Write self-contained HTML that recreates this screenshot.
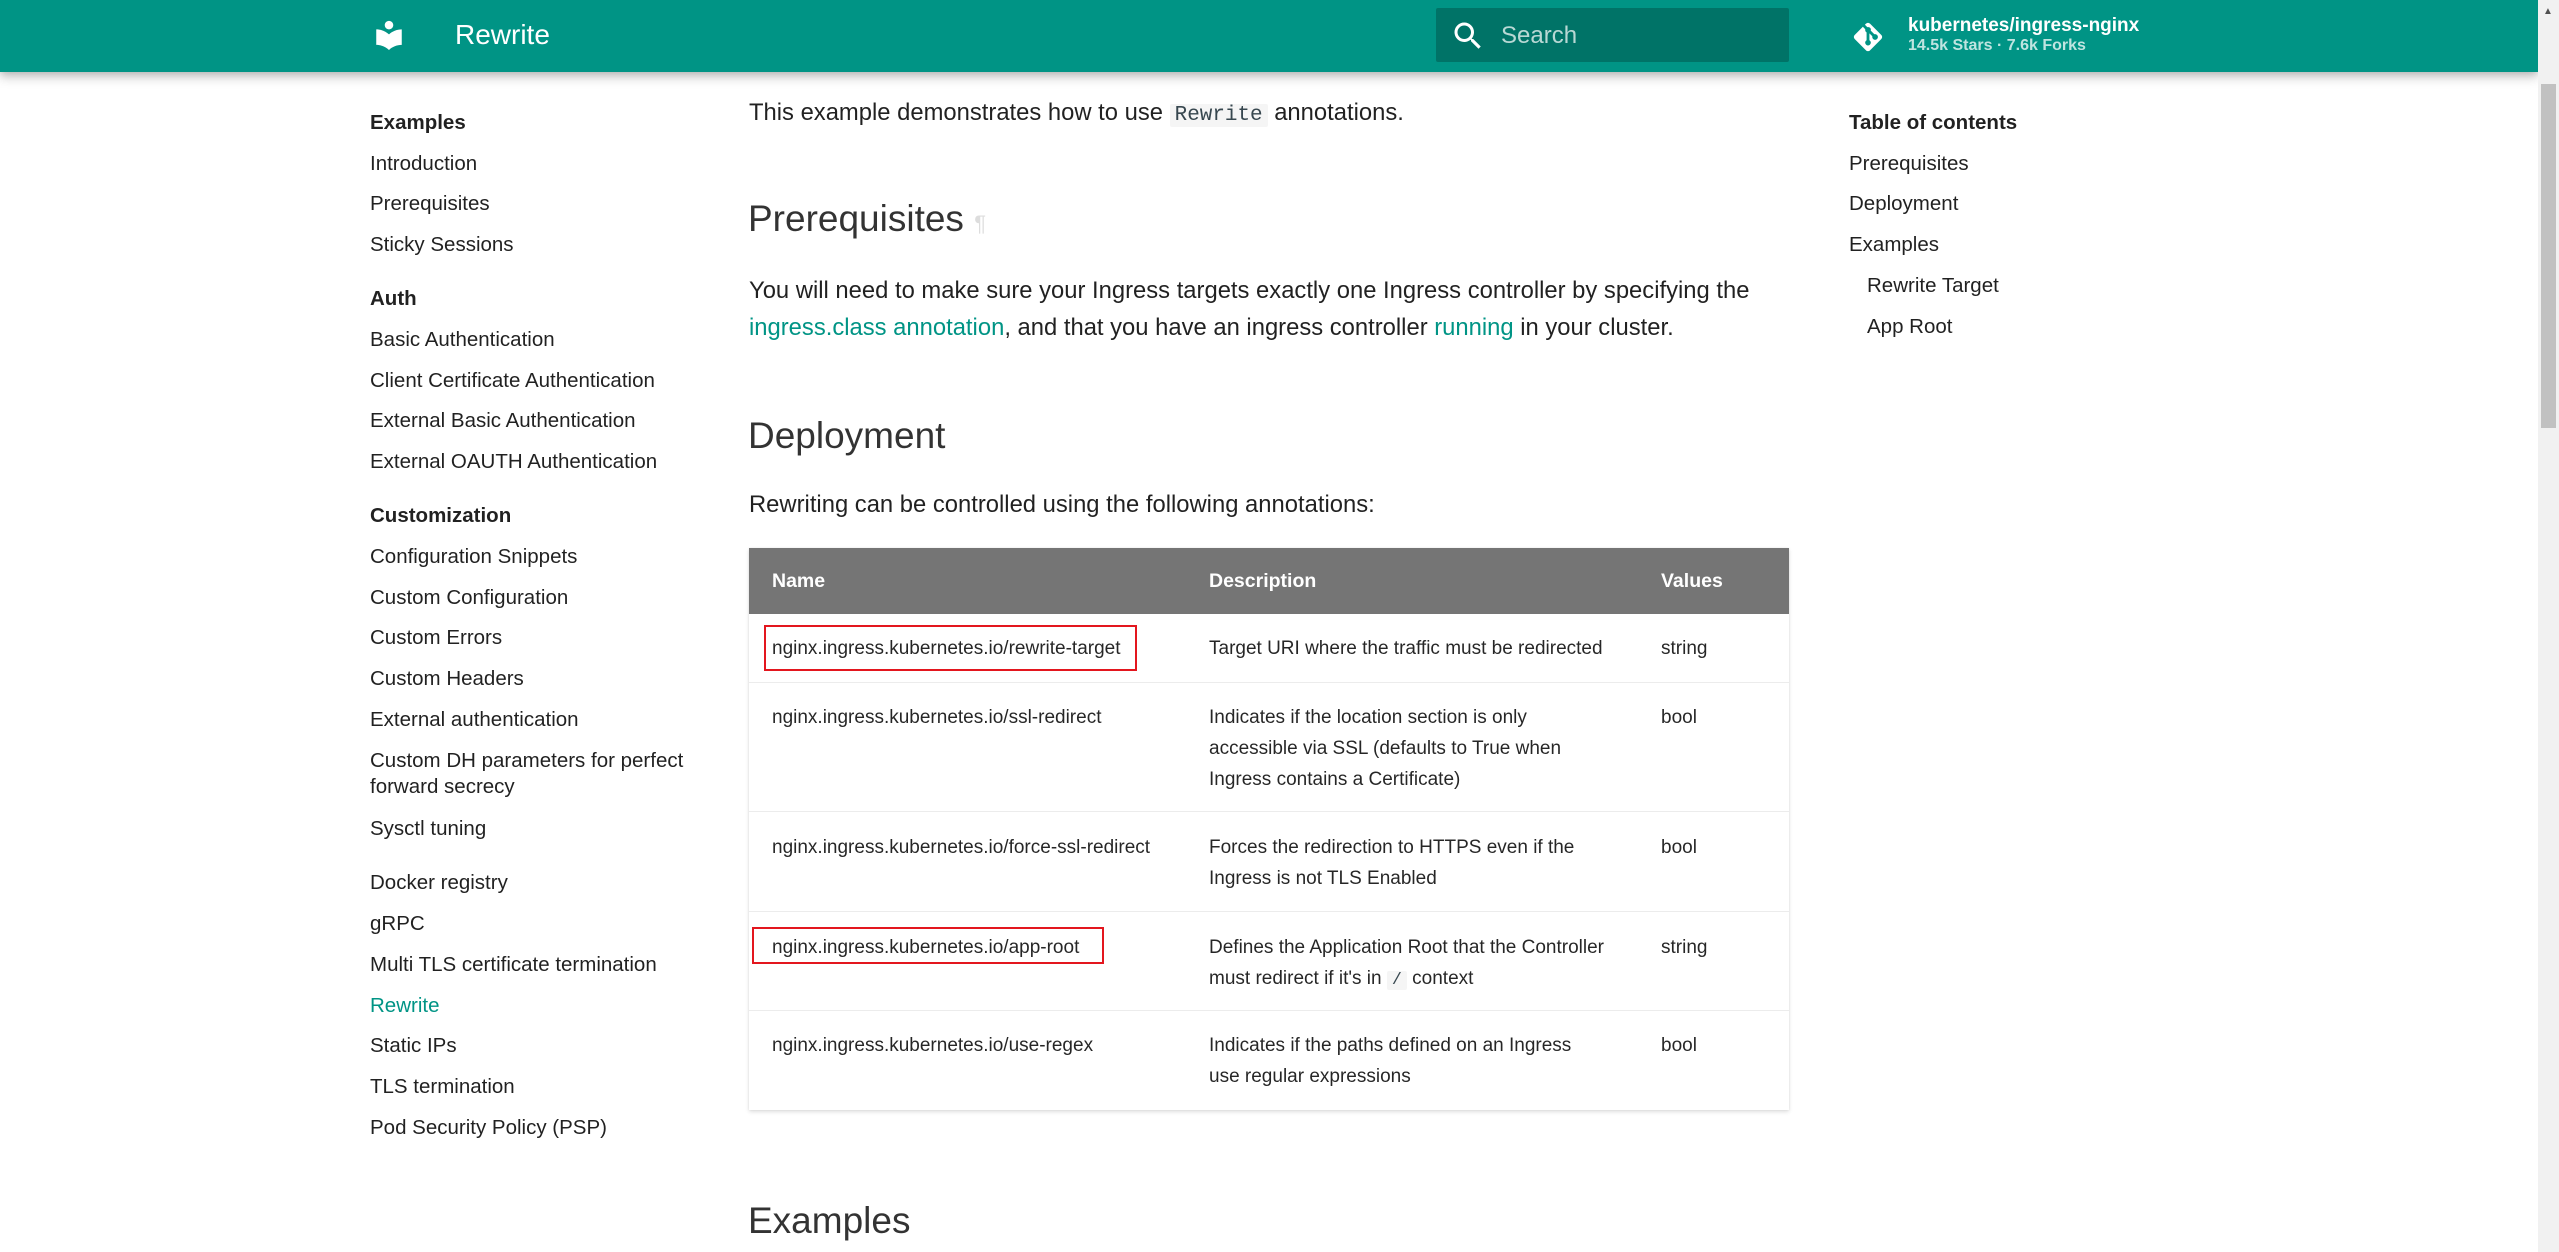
<!DOCTYPE html>
<html><head><meta charset="utf-8"><style>
*{margin:0;padding:0;box-sizing:border-box}
html,body{width:2559px;height:1252px;overflow:hidden;background:#fff;font-family:"Liberation Sans",Arial,sans-serif;color:rgba(0,0,0,.87)}
.t{position:absolute;white-space:nowrap}
.hd{position:absolute;left:0;top:0;width:2538px;height:72px;background:#009485;box-shadow:0 0 8px rgba(0,0,0,.2),0 6px 10px rgba(0,0,0,.18)}
.nav{font-size:20.5px;line-height:28px;left:370px;color:rgba(0,0,0,.87);margin-top:2px}
.nav.b{font-weight:bold}
.toc{font-size:20.5px;line-height:28px;color:rgba(0,0,0,.87);margin-top:2px}
.p{font-size:23.8px;line-height:30px;left:749px;color:rgba(0,0,0,.87);margin-top:2px}
.h2{font-size:37px;line-height:44px;left:748px;color:rgba(0,0,0,.8);margin-top:2px}
a{color:#009485;text-decoration:none}
code{font-family:"Liberation Mono",monospace;background:#f5f5f5;padding:0 5px;font-size:.88em;color:#37474f;border-radius:2px}
.tbl{position:absolute;left:749px;top:548px;width:1040px;height:562px;box-shadow:0 2px 4px rgba(0,0,0,.12),0 0 2px rgba(0,0,0,.08);background:#fff}
.th{position:absolute;left:0;top:0;width:100%;height:66px;background:#757575}
.row{position:absolute;left:0;width:100%;border-top:1.5px solid #ececec}
.c{font-size:19px;line-height:31px;color:rgba(0,0,0,.85);margin-top:2px}
.thc{font-size:19.5px;font-weight:bold;color:#fff;line-height:30px;top:566px}
.red{position:absolute;border:2px solid #e3161e}
</style></head><body>
<div class="hd"></div>
<svg class="t" style="left:372px;top:18px" width="34" height="34" viewBox="0 0 24 24"><path fill="#fff" d="M12 11.55C9.64 9.35 6.48 8 3 8v11c3.48 0 6.64 1.35 9 3.55 2.36-2.19 5.52-3.55 9-3.55V8c-3.48 0-6.64 1.35-9 3.55zM12 8c1.66 0 3-1.34 3-3s-1.34-3-3-3-3 1.34-3 3 1.34 3 3 3z"/></svg>
<div class="t" style="left:455px;top:16px;font-size:28px;line-height:38px;color:#fff">Rewrite</div>
<div class="t" style="left:1436px;top:8px;width:353px;height:54px;background:rgba(0,0,0,.22);border-radius:2px"></div>
<svg class="t" style="left:1450px;top:18px" width="36" height="36" viewBox="0 0 24 24"><path fill="#fff" d="M9.5 3A6.5 6.5 0 0 1 16 9.5c0 1.61-.59 3.09-1.56 4.23l.27.27h.79l5 5-1.5 1.5-5-5v-.79l-.27-.27A6.52 6.52 0 0 1 9.5 16 6.5 6.5 0 0 1 3 9.5 6.5 6.5 0 0 1 9.5 3m0 2C7 5 5 7 5 9.5S7 14 9.5 14 14 12 14 9.5 12 5 9.5 5z"/></svg>
<div class="t" style="left:1501px;top:20px;font-size:24px;line-height:32px;color:rgba(255,255,255,.72)">Search</div>
<svg class="t" style="left:1850px;top:20px" width="36" height="34" viewBox="0 0 24 24"><path fill="#fff" d="M2.6 10.59L8.38 4.8l1.69 1.7c-.24.85.15 1.78.93 2.23v5.54c-.6.34-1 .99-1 1.73a2 2 0 0 0 2 2 2 2 0 0 0 2-2c0-.74-.4-1.39-1-1.73V9.41l2.07 2.09c-.07.15-.07.32-.07.5a2 2 0 0 0 2 2 2 2 0 0 0 2-2 2 2 0 0 0-2-2c-.18 0-.35 0-.5.07L13.93 7.5a1.98 1.98 0 0 0-1.15-2.34c-.43-.16-.88-.2-1.28-.09L9.8 3.38l.79-.78c.78-.79 2.04-.79 2.82 0l7.99 7.99c.79.78.79 2.04 0 2.82l-7.99 7.99c-.78.79-2.04.79-2.82 0L2.6 13.41c-.79-.78-.79-2.04 0-2.82z"/></svg>
<div class="t" style="left:1908px;top:14px;font-size:19px;font-weight:bold;line-height:24px;color:#fff">kubernetes/ingress-nginx</div>
<div class="t" style="left:1908px;top:36px;font-size:16px;font-weight:bold;line-height:20px;color:rgba(255,255,255,.75)">14.5k Stars · 7.6k Forks</div>
<div class="t" style="left:2538px;top:0;width:21px;height:1252px;background:#f1f1f1"></div>
<div class="t" style="left:2541px;top:84px;width:15px;height:344px;background:#c1c1c1"></div>
<div class="t" style="left:2543px;top:6px;font-size:10px;color:#505050">▲</div>

<div class="t nav b" style="top:107px">Examples</div>
<div class="t nav" style="top:148px">Introduction</div>
<div class="t nav" style="top:188px">Prerequisites</div>
<div class="t nav" style="top:229px">Sticky Sessions</div>
<div class="t nav b" style="top:283px">Auth</div>
<div class="t nav" style="top:324px">Basic Authentication</div>
<div class="t nav" style="top:365px">Client Certificate Authentication</div>
<div class="t nav" style="top:405px">External Basic Authentication</div>
<div class="t nav" style="top:446px">External OAUTH Authentication</div>
<div class="t nav b" style="top:500px">Customization</div>
<div class="t nav" style="top:541px">Configuration Snippets</div>
<div class="t nav" style="top:582px">Custom Configuration</div>
<div class="t nav" style="top:622px">Custom Errors</div>
<div class="t nav" style="top:663px">Custom Headers</div>
<div class="t nav" style="top:704px">External authentication</div>
<div class="t nav" style="top:745px">Custom DH parameters for perfect</div>
<div class="t nav" style="top:771px">forward secrecy</div>
<div class="t nav" style="top:813px">Sysctl tuning</div>
<div class="t nav" style="top:867px">Docker registry</div>
<div class="t nav" style="top:908px">gRPC</div>
<div class="t nav" style="top:949px">Multi TLS certificate termination</div>
<div class="t nav" style="top:990px;color:#009485">Rewrite</div>
<div class="t nav" style="top:1030px">Static IPs</div>
<div class="t nav" style="top:1071px">TLS termination</div>
<div class="t nav" style="top:1112px">Pod Security Policy (PSP)</div>

<div class="t toc" style="left:1849px;top:107px;font-weight:bold">Table of contents</div>
<div class="t toc" style="left:1849px;top:148px">Prerequisites</div>
<div class="t toc" style="left:1849px;top:188px">Deployment</div>
<div class="t toc" style="left:1849px;top:229px">Examples</div>
<div class="t toc" style="left:1867px;top:270px">Rewrite Target</div>
<div class="t toc" style="left:1867px;top:311px">App Root</div>

<div class="t p" style="top:96px">This example demonstrates how to use <code>Rewrite</code> annotations.</div>
<div class="t h2" style="top:195px">Prerequisites <span style="color:#ddd;font-size:22px">¶</span></div>
<div class="t p" style="top:274px">You will need to make sure your Ingress targets exactly one Ingress controller by specifying the</div>
<div class="t p" style="top:311px"><a>ingress.class annotation</a>, and that you have an ingress controller <a>running</a> in your cluster.</div>
<div class="t h2" style="top:412px">Deployment</div>
<div class="t p" style="top:488px">Rewriting can be controlled using the following annotations:</div>

<div class="tbl"><div class="th"></div>
<div class="row" style="top:134px"></div><div class="row" style="top:263px"></div><div class="row" style="top:363px"></div><div class="row" style="top:462px"></div></div>
<div class="t thc" style="left:772px">Name</div>
<div class="t thc" style="left:1209px">Description</div>
<div class="t thc" style="left:1661px">Values</div>

<div class="t c" style="left:772px;top:631px">nginx.ingress.kubernetes.io/rewrite-target</div>
<div class="t c" style="left:1209px;top:631px">Target URI where the traffic must be redirected</div>
<div class="t c" style="left:1661px;top:631px">string</div>
<div class="red" style="left:764px;top:625px;width:373px;height:46px"></div>

<div class="t c" style="left:772px;top:700px">nginx.ingress.kubernetes.io/ssl-redirect</div>
<div class="t c" style="left:1209px;top:700px">Indicates if the location section is only<br>accessible via SSL (defaults to True when<br>Ingress contains a Certificate)</div>
<div class="t c" style="left:1661px;top:700px">bool</div>

<div class="t c" style="left:772px;top:830px">nginx.ingress.kubernetes.io/force-ssl-redirect</div>
<div class="t c" style="left:1209px;top:830px">Forces the redirection to HTTPS even if the<br>Ingress is not TLS Enabled</div>
<div class="t c" style="left:1661px;top:830px">bool</div>

<div class="t c" style="left:772px;top:930px">nginx.ingress.kubernetes.io/app-root</div>
<div class="t c" style="left:1209px;top:930px">Defines the Application Root that the Controller<br>must redirect if it's in <code>/</code> context</div>
<div class="t c" style="left:1661px;top:930px">string</div>
<div class="red" style="left:752px;top:927px;width:352px;height:37px"></div>

<div class="t c" style="left:772px;top:1028px">nginx.ingress.kubernetes.io/use-regex</div>
<div class="t c" style="left:1209px;top:1028px">Indicates if the paths defined on an Ingress<br>use regular expressions</div>
<div class="t c" style="left:1661px;top:1028px">bool</div>

<div class="t h2" style="top:1197px">Examples</div>
</body></html>
